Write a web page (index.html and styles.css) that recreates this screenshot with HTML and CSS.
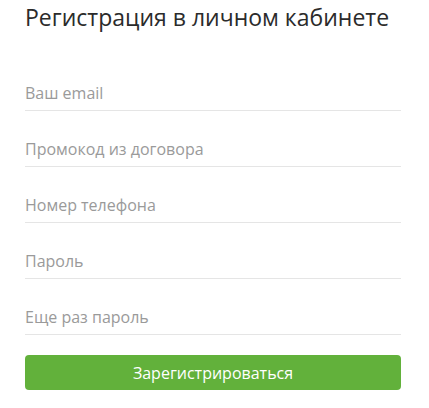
FILE: index.html
```html
<!DOCTYPE html>
<html>
<head>
<meta charset="utf-8">
	<title>Регистрация</title>
	<link rel="stylesheet" href="styles.css">
</head>
<body>
	<div class="container">
		<h1 class="title">Регистрация в личном кабинете</h1>
		<form class="regForm">
			<input class="field" type="email" placeholder="Ваш email">
			<input class="field" type="text" placeholder="Промокод из договора">
			<input class="field" type="tel" placeholder="Номер телефона">
			<input class="field" type="password" placeholder="Пароль">
			<input class="field" type="password" placeholder="Еще раз пароль">
			<button class="regBtn" type="button">Зарегистрироваться</button>
		</form>
	</div>
</body>
</html>
```
FILE: styles.css
```css
body{
	margin: 0px;
	padding: 0px;
	background-color: #fff;
	font-family: "Open Sans", "Noto Sans", sans-serif;
}
.container{
	padding: 0px 28px 0px 25px;
}
.title{
	margin: 2px 0px 0px 0px;
	font-size: 23px;
	line-height: 31px;
	font-weight: normal;
	color: #2b2b2b;
}
.regForm{
	display: flex;
	flex-direction: column;
	margin-top: 22px;
}
.field{
	height: 56px;
	box-sizing: border-box;
	padding: 20px 0px 0px 0px;
	border: none;
	border-bottom: 1px solid #e5e5e5;
	font-family: inherit;
	font-size: 16px;
	color: #333;
	outline: none;
}
.field::placeholder{
	color: #9a9a9a;
}
.regBtn{
	margin-top: 20px;
	height: 35px;
	border: none;
	border-radius: 4px;
	background-color: #62b13b;
	color: #fff;
	font-family: inherit;
	font-size: 16px;
}
```
